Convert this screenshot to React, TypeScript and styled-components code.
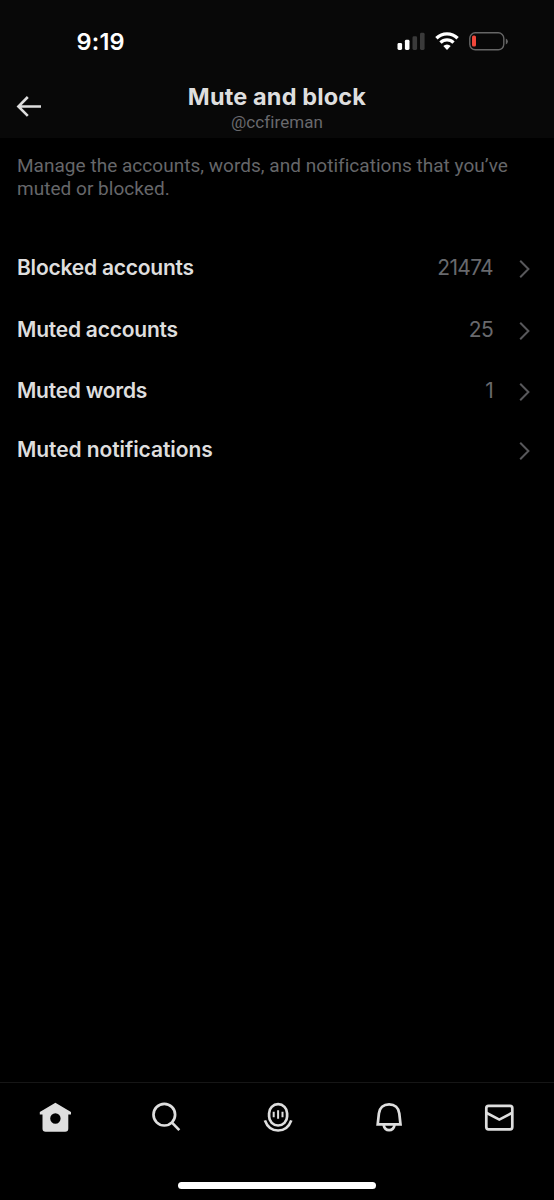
import React from 'react';
import styled, { createGlobalStyle } from 'styled-components';

const GlobalStyle = createGlobalStyle`
  * { box-sizing: border-box; }
  body { margin: 0; background: #000; }
`;

const Screen = styled.div`
  display: flex;
  flex-direction: column;
  width: 554px;
  height: 1200px;
  overflow: hidden;
  background: #000;
  color: #dedede;
  font-family: Inter, "Liberation Sans", sans-serif;
`;

const Top = styled.header`
  height: 138px;
  flex: none;
  background: #080808;
`;

const StatusBar = styled.div`
  display: flex;
  justify-content: space-between;
  height: 82px;
  padding: 0 45px 0 76.5px;
`;

const Time = styled.span`
  padding-top: 27px;
  font-size: 23.5px;
  line-height: 30px;
  font-weight: 600;
  letter-spacing: 0.2px;
  color: #fff;
`;

const StatusIcons = styled.svg`
  display: block;
  width: 112px;
  height: 20px;
  margin-top: 31px;
`;

const NavBar = styled.div`
  display: grid;
  grid-template-columns: 60px 1fr 60px;
  height: 56px;
`;

const BackButton = styled.button`
  display: flex;
  padding: 13px 0 0 16px;
  border: 0;
  background: none;
  color: #dedede;
`;

const Titles = styled.div`
  text-align: center;
`;

const Title = styled.h1`
  margin: 0;
  font-size: 23.5px;
  line-height: 30px;
  font-weight: 700;
  letter-spacing: 0.15px;
`;

const Handle = styled.div`
  font-family: Roboto, sans-serif;
  font-size: 17px;
  line-height: 20px;
  letter-spacing: 0.08px;
  color: #68696d;
`;

const Description = styled.p`
  margin: 0;
  padding: 16px 17px 0;
  height: 99px;
  font-family: Roboto, sans-serif;
  font-size: 19px;
  line-height: 23px;
  letter-spacing: 0.03px;
  color: #66676a;
  white-space: nowrap;
`;

const List = styled.main`
  flex: 1;
`;

const Row = styled.div<{ $height: number }>`
  display: flex;
  align-items: center;
  height: ${(p) => p.$height}px;
  padding: 0 23px 0 17px;
`;

const Label = styled.span<{ $tracking: number }>`
  flex: 1;
  padding-bottom: 2px;
  font-size: 21px;
  line-height: 26px;
  font-weight: 600;
  letter-spacing: ${(p) => p.$tracking}px;
`;

const Count = styled.span`
  margin-right: 26px;
  padding-bottom: 2px;
  font-size: 21px;
  line-height: 26px;
  letter-spacing: -0.7px;
  color: #68696d;
`;

const TabBar = styled.nav`
  display: grid;
  grid-template-columns: repeat(5, 1fr);
  justify-items: center;
  height: 100px;
  padding-top: 18px;
  border-top: 1px solid #161616;
`;

const HomeIndicator = styled.div`
  width: 198px;
  height: 7px;
  margin: 0 auto 11px;
  border-radius: 4px;
  background: #fff;
  flex: none;
`;

const TabIcon = styled.svg`
  display: block;
  width: 34px;
  height: 34px;
  fill: none;
  stroke: #dedede;
  stroke-width: 2.7;
`;

const Chevron = () => (
  <svg width="12" height="18" viewBox="0 0 12 18" fill="none" stroke="#58585b" strokeWidth="2">
    <path d="M1.2 .8 9.4 9 1.2 17.2" />
  </svg>
);

const rows = [
  { label: 'Blocked accounts', count: '21474', height: 63, tracking: -0.22 },
  { label: 'Muted accounts', count: '25', height: 61, tracking: -0.23 },
  { label: 'Muted words', count: '1', height: 61, tracking: -0.26 },
  { label: 'Muted notifications', count: '', height: 58, tracking: -0.08 },
];

export default function App() {
  return (
    <>
      <GlobalStyle />
      <Screen>
        <Top>
          <StatusBar>
            <Time>9:19</Time>
            <StatusIcons viewBox="0 0 112 20">
              <rect x="0.5" y="12" width="4.6" height="7" rx="1.4" fill="#fff" />
              <rect x="7.9" y="8.8" width="4.6" height="10.2" rx="1.4" fill="#fff" />
              <rect x="15.5" y="5.3" width="4.6" height="13.7" rx="1.4" fill="#3a3a3a" />
              <rect x="23" y="1.8" width="4.6" height="17.2" rx="1.4" fill="#3a3a3a" />
              <g fill="none" stroke="#fff" strokeWidth="3.3">
                <path d="M39.4 7.2a15.2 15.2 0 0 1 21.2 0" />
                <path d="M43.5 11.6a9.2 9.2 0 0 1 13 0" />
              </g>
              <path d="M46.3 15a5.3 5.3 0 0 1 7.4 0L50 19Z" fill="#fff" />
              <rect x="72.8" y="1.8" width="34" height="17" rx="5.5" fill="none" stroke="#666" strokeWidth="1.4" />
              <rect x="75" y="4.6" width="4" height="11" rx="1.6" fill="#f0473a" />
              <path d="M108.8 7.5q2.1 1 2.1 3t-2.1 3Z" fill="#666" />
            </StatusIcons>
          </StatusBar>
          <NavBar>
            <BackButton aria-label="Back">
              <svg width="27" height="24" viewBox="0 0 27 24" fill="none" stroke="currentColor" strokeWidth="2.6">
                <path d="M25 11.5H2.6M11.8 2 2.4 11.5l9.4 9.4" />
              </svg>
            </BackButton>
            <Titles>
              <Title>Mute and block</Title>
              <Handle>@ccfireman</Handle>
            </Titles>
          </NavBar>
        </Top>
        <List>
          <Description>
            Manage the accounts, words, and notifications that you’ve
            <br />
            muted or blocked.
          </Description>
          {rows.map((r) => (
            <Row key={r.label} $height={r.height}>
              <Label $tracking={r.tracking}>{r.label}</Label>
              <Count>{r.count}</Count>
              <Chevron />
            </Row>
          ))}
        </List>
        <TabBar>
          <TabIcon viewBox="0 0 34 34">
            <path
              fill="#dedede"
              stroke="none"
              fillRule="evenodd"
              d="M17.400 1.700 33 11v2.500H30.300v14q0 3.200-3.200 3.200H7.700q-3.200 0-3.200-3.200v-14H1.800V11ZM17.400 12.300a5.200 5.200 0 1 0 0 10.400 5.200 5.200 0 0 0 0-10.400Z"
            />
          </TabIcon>
          <TabIcon viewBox="0 0 34 34">
            <circle cx="15.3" cy="13.7" r="10.8" />
            <path d="m22.8 21.400 7.500 7.700" />
          </TabIcon>
          <TabIcon viewBox="0 0 34 34">
            <rect x="9.1" y="3.2" width="18" height="21.3" rx="9" />
            <path d="M4.9 19.400c2.300 6.400 7.100 10.100 13.200 10.100s10.900-3.700 13.200-10.100" />
            <path strokeWidth="2" d="M13.700 10.700v5.500M18.100 9.300v8.500M22.500 10.700v5.500" />
          </TabIcon>
          <TabIcon viewBox="0 0 34 34">
            <path d="M6.7 23.300 7.900 12.500C8.500 7 12.500 3.300 18.100 3.300S27.700 7 28.300 12.500L29.500 23.300Z" />
            <path d="M12.600 24c.7 3.300 2.800 5.200 5.500 5.200s4.800-1.900 5.500-5.200" />
          </TabIcon>
          <TabIcon viewBox="0 0 34 34">
            <rect x="4.3" y="4.8" width="26" height="23.600" rx="2.300" />
            <path d="m4.300 11.800 13 6.800 13-6.800" />
          </TabIcon>
        </TabBar>
        <HomeIndicator />
      </Screen>
    </>
  );
}
